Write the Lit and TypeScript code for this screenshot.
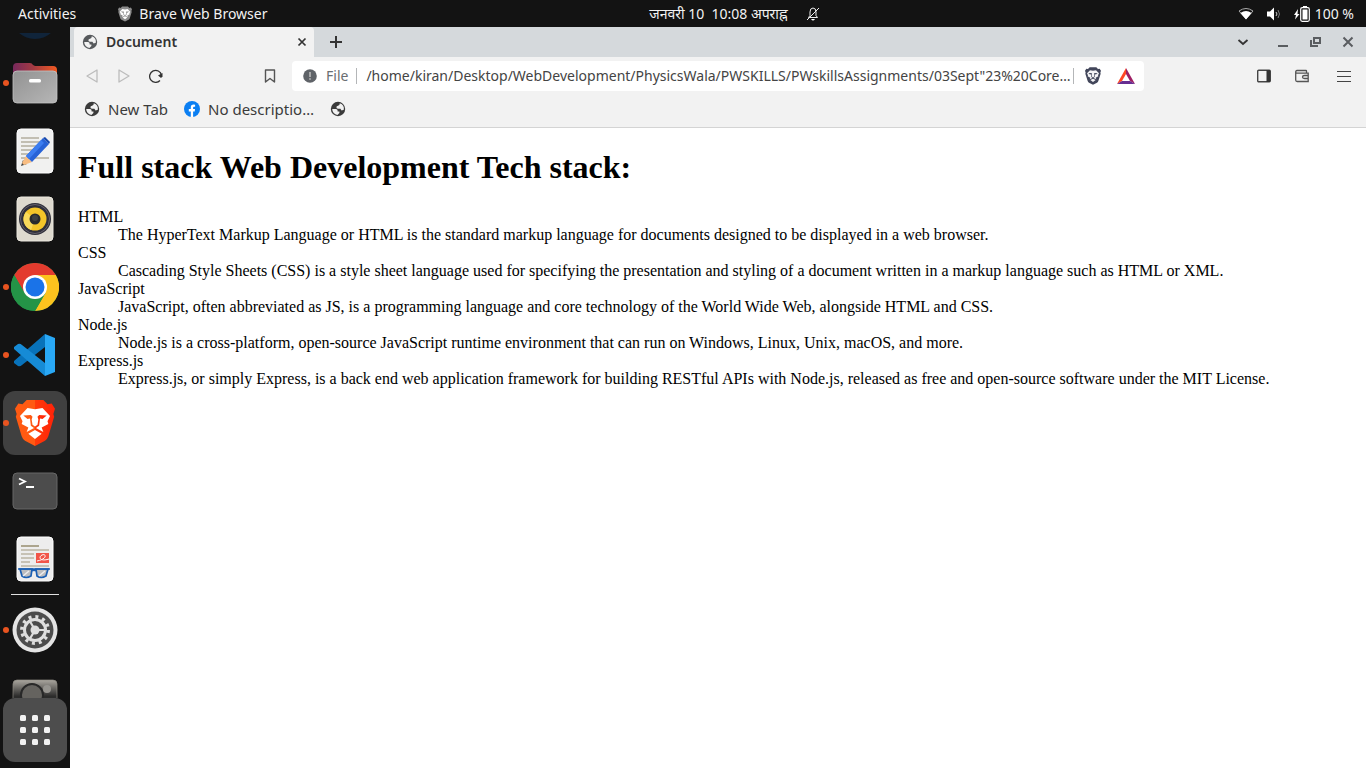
import { LitElement, html, css, svg } from "lit";
import { customElement } from "lit/decorators.js";

const globe = html`<svg width="16" height="16" viewBox="0 0 16 16" aria-hidden="true">
  <circle cx="8" cy="8" r="7.2" fill="currentColor" />
  <path d="M2.2 8H6Q7.600 8 7.600 9.600V10.400H9.400V12L7.400 13.900A5.900 5.900 0 0 1 2.200 8ZM9.800 2.300A5.900 5.900 0 0 1 13.800 8.800L11.600 9.400 10.400 7.800H8Q6.400 7.600 6.400 6.200 6.400 5 8 4.800 9.800 4.600 9.800 2.300Z" fill="#f2f2f2" />
</svg>`;

const lion = (shield: string, face: string) => svg`
  <path d="M14 1h20l5 5 5-1 4 6-2 6 1 3-7 22q-1 3-4 5L24 53 12 47q-3-2-4-5L1 20l1-3-2-6 4-6 5 1z" fill=${shield} />
  <path d="M15 10 24 11.500 33 10 42 19 39 25 40 28 32 32 34 37 24 32 14 37 16 32 8 28 9 25 6 19ZM16 39 24 35 32 39 24 45Z" fill=${face} />
  <path d="M10 18.500 19 18 21 20 20 23 21 29 24 31 27 29 28 23 27 20 29 18 38 18.500 33 22.500 30 22 29 30 24 33.500 19 30 18 22 15 22.500Z" fill=${shield} />`;

const folder = html`<svg width="46" height="42" viewBox="0 0 46 42" aria-hidden="true">
  <defs>
    <linearGradient id="fb"><stop stop-color="#77295c" /><stop offset=".45" stop-color="#a33a43" /><stop offset="1" stop-color="#f15a22" /></linearGradient>
    <linearGradient id="ff" x1="0" y1="0" x2="1" y2="1"><stop stop-color="#929292" /><stop offset="1" stop-color="#b6b6b6" /></linearGradient>
  </defs>
  <path d="M1 20V5q0-4 4-4h13q2 0 3 2l2 1h18q4 0 4 4v12z" fill="url(#fb)" />
  <rect x="1" y="9" width="44" height="32" rx="4" fill="url(#ff)" stroke="#c4c4c4" stroke-width=".8" />
  <rect x="17" y="17" width="12" height="3.5" rx="1.5" fill="#fff" />
</svg>`;

const editor = html`<svg width="38" height="46" viewBox="0 0 38 46" aria-hidden="true">
  <rect x="1" y="1" width="36" height="44" rx="4" fill="#f1f1f0" stroke="#fff" />
  <path d="M5 10h18M5 14h22M5 18h15M5 22h14M5 26h12M5 30h28" stroke="#c2beb2" stroke-width="2" />
  <path d="M7 32 5 38 11 36Z" fill="#444" /><path d="m10 28-4 7 2 2 8-3z" fill="#f8bd82" />
  <path d="M27 10 33 16 16 34 10 28Z" fill="#2863d7" /><path d="m25 12 3 3-15 16-3-3z" fill="#3c7df0" /><path d="m27 10 2-1 5 5-1 2z" fill="#1748ac" />
</svg>`;

const speaker = html`<svg width="38" height="46" viewBox="0 0 38 46" aria-hidden="true">
  <rect x="1" y="1" width="36" height="44" rx="4" fill="#dedacf" stroke="#ebe8df" />
  <circle cx="19" cy="23" r="16" fill="#30303a" /><circle cx="19" cy="23" r="14.5" fill="none" stroke="#65616d" stroke-width="1" />
  <circle cx="19" cy="23" r="11.5" fill="#f4c529" /><path d="M10 16a11.5 11.5 0 0 0 5 18l4-11z" fill="#f9da5b" />
  <circle cx="19" cy="23" r="5.5" fill="#292b2d" /><circle cx="19" cy="22" r="3" fill="#3e4142" />
</svg>`;

const chrome = html`<svg width="48" height="48" viewBox="0 0 48 48" aria-hidden="true">
  <circle cx="24" cy="24" r="24" fill="#1e8e4a" />
  <path d="M3.2 12A24 24 0 0 1 44.8 12H24L13.6 30Z" fill="#e33b2e" />
  <path d="M44.8 12A24 24 0 0 1 24 48L34.4 30 24 12Z" fill="#fcc31e" />
  <path d="M3.2 12 13.6 30 24 36 34.4 30 24 48A24 24 0 0 1 3.2 12Z" fill="#249447" />
  <circle cx="24" cy="24" r="12" fill="#fff" /><circle cx="24" cy="24" r="9.5" fill="#1a73e8" />
</svg>`;

const code = html`<svg width="42" height="42" viewBox="0 0 42 42" aria-hidden="true">
  <path d="M31 0 0 27V29L4 32Q6 33 8 31L31 13Z" fill="#0872ba" />
  <path d="M31 42 0 15V13L4 10Q6 9 8 11L31 29Z" fill="#168bd6" />
  <path d="M31 0 41 4V38L31 42Z" fill="#29a8f5" />
</svg>`;

const brave = html`<svg width="40" height="48" viewBox="0 0 48 54" preserveAspectRatio="none" aria-hidden="true">
  <defs><linearGradient id="br"><stop offset=".5" stop-color="#ff5a12" /><stop offset=".5" stop-color="#ff3b0a" /><stop offset="1" stop-color="#ff2208" /></linearGradient></defs>
  ${lion("url(#br)", "#fff")}
</svg>`;

const terminal = html`<svg width="46" height="38" viewBox="0 0 46 38" aria-hidden="true">
  <rect x="1" y="1" width="44" height="36" rx="4" fill="#4c4c4c" stroke="#666" />
  <path d="m7 6.500 6 3-6 3M14 15h8" fill="none" stroke="#fff" stroke-width="1.8" />
</svg>`;

const viewer = html`<svg width="38" height="46" viewBox="0 0 38 46" aria-hidden="true">
  <rect x="1" y="1" width="36" height="44" rx="4" fill="#ededed" stroke="#fff" />
  <path d="M5 10h18" stroke="#aca58e" stroke-width="2" /><path d="M5 14h28M5 18h13M5 22h13M5 26h9M5 30h28" stroke="#c7c2b5" stroke-width="2" />
  <rect x="20" y="17" width="13" height="10" fill="#f15549" /><path d="M21 25c11-2 9-8 5-6s-2 7 7 4" fill="none" stroke="#fff" />
  <g fill="#bcbdbf" stroke="#1a5fb4" stroke-width="1.7"><path d="M4 33h12l-1 7q-5 3-9 0zM20 33h12l-2 7q-5 3-9 0z" /><path d="M2 33h32M16 35q2-2 4 0" fill="none" /></g>
  <path d="m7 40 6-5M23 40l6-5" stroke="#eee" stroke-width="1.5" />
</svg>`;

const settings = html`<svg width="46" height="46" viewBox="0 0 46 46" aria-hidden="true">
  <circle cx="23" cy="23" r="22.5" fill="#e4e4e4" /><circle cx="23" cy="23" r="18.5" fill="#4c4c4c" />
  <circle cx="23" cy="23" r="13.2" fill="none" stroke="#dedede" stroke-width="3.5" stroke-dasharray="3 3.910" />
  <circle cx="23" cy="23" r="10.5" fill="none" stroke="#dedede" stroke-width="3" />
  <path d="M23 23h11M23 23l-5.5-9.5M23 23l-5.5 9.5" stroke="#dedede" stroke-width="2.2" /><circle cx="23" cy="23" r="4.5" fill="#dedede" />
</svg>`;

const camera = html`<svg width="46" height="38" viewBox="0 0 46 38" aria-hidden="true">
  <defs><linearGradient id="cm" x2="0" y2="1"><stop stop-color="#aaa69f" /><stop offset=".45" stop-color="#2c2c2b" /></linearGradient></defs>
  <rect x="1" y="1" width="44" height="36" rx="4" fill="url(#cm)" stroke="#8c8982" stroke-width=".7" />
  <circle cx="20" cy="16" r="11" fill="#65635f" stroke="#282828" stroke-width="2" /><circle cx="35" cy="10" r="4" fill="#96948f" />
</svg>`;

const worldApp = html`<svg width="48" height="48" viewBox="0 0 48 48" aria-hidden="true"><circle cx="24" cy="24" r="24" fill="#10243a" /></svg>`;

const apps = [
  { name: "Thunderbird", icon: worldApp },
  { name: "Files", icon: folder, open: true },
  { name: "Text Editor", icon: editor },
  { name: "Rhythmbox", icon: speaker },
  { name: "Google Chrome", icon: chrome, open: true },
  { name: "Visual Studio Code", icon: code, open: true },
  { name: "Brave Web Browser", icon: brave, open: true, active: true },
  { name: "Terminal", icon: terminal },
  { name: "Document Viewer", icon: viewer },
  { name: "Settings", icon: settings, open: true, separated: true },
  { name: "Screenshot", icon: camera },
];

const terms = [
  ["HTML", "The HyperText Markup Language or HTML is the standard markup language for documents designed to be displayed in a web browser."],
  ["CSS", "Cascading Style Sheets (CSS) is a style sheet language used for specifying the presentation and styling of a document written in a markup language such as HTML or XML."],
  ["JavaScript", "JavaScript, often abbreviated as JS, is a programming language and core technology of the World Wide Web, alongside HTML and CSS."],
  ["Node.js", "Node.js is a cross-platform, open-source JavaScript runtime environment that can run on Windows, Linux, Unix, macOS, and more."],
  ["Express.js", "Express.js, or simply Express, is a back end web application framework for building RESTful APIs with Node.js, released as free and open-source software under the MIT License."],
];

const reset = css`
  * { box-sizing: border-box; }
  svg { display: block; flex: none; }
  button { font: inherit; color: inherit; background: none; border: 0; padding: 0; margin: 0; display: flex; align-items: center; justify-content: center; }
`;

@customElement("top-panel")
class TopPanel extends LitElement {
  static styles = [reset, css`
    :host { display: grid; grid-template-columns: 1fr auto 1fr; align-items: center; height: 27px; background: #131313; color: #f2f2f2; font: 14px/27px "Noto Sans", sans-serif; white-space: nowrap; }
    .group { display: flex; align-items: center; padding-left: 18px; gap: 42px; }
    .app { gap: 7px; }
    .clock { gap: 18px; padding-left: 103px; white-space: pre; }
    .status { justify-self: end; padding-right: 12px; gap: 12px; }
    .battery { display: flex; align-items: center; gap: 5px; }
  `];
  render() {
    return html`
      <div class="group">
        <button>Activities</button>
        <button class="app"><svg width="14" height="16" viewBox="0 0 48 54" aria-hidden="true">${lion("#8b8b8b", "#fff")}</svg>Brave Web Browser</button>
      </div>
      <button class="clock"><span>जनवरी 10  10:08 अपराह्न</span>
        <svg width="14" height="16" viewBox="0 0 14 16" fill="none" stroke="#eee" aria-label="Notifications muted"><path d="M2.5 11.5 4 9.5V6q0-4 3-4t3 4v3.5l1.5 2zM1 14 13 2" /><path d="M5 13h4q-2 3-4 0z" fill="#fff" stroke="none" /></svg></button>
      <div class="group status">
        <svg width="16" height="14" viewBox="0 0 16 14" fill="none" aria-label="Wi-Fi"><path d="M1 4Q8-1 15 4L8 12Z" stroke="#aaa" /><path d="M2.500 6Q8 2 13.500 6L8 12.500Z" fill="#fff" /></svg>
        <svg width="16" height="14" viewBox="0 0 16 14" fill="none" aria-label="Volume"><path d="M1 4.500h3L8 .5v13L4 9.500H1z" fill="#fff" /><path d="M10 5q2 2 0 4" stroke="#ccc" /><path d="M12 3q3 4 0 8" stroke="#777" /></svg>
        <span class="battery"><svg width="16" height="16" viewBox="0 0 16 16" aria-label="Battery charging"><path d="M4 3 0 9h2l-1 4.500L5.500 8H3.500z" fill="#fff" /><rect x="6.700" y="1.700" width="8.600" height="13.600" rx="1.500" fill="none" stroke="#fff" stroke-width="1.200" /><path d="M8.500 3.500h5v10h-5zM9 0h4v2H9z" fill="#fff" /></svg>100 %</span>
      </div>`;
  }
}

@customElement("app-dock")
class AppDock extends LitElement {
  static styles = [reset, css`
    :host { display: flex; flex-direction: column; width: 70px; flex: none; background: #131313; padding-bottom: 6px; min-height: 0; }
    .scroll { flex: 1; min-height: 0; overflow: hidden; margin-top: 6px; }
    .list { margin: -50px 0 0; padding: 0; list-style: none; display: flex; flex-direction: column; gap: 4px; }
    .item { display: flex; align-items: center; padding-left: 3px; }
    .separated { padding-top: 4px; margin-top: -1px; background: linear-gradient(#e0e0e0, #e0e0e0) 11px 0 / 48px 1px no-repeat; }
    .dot { width: 6px; height: 6px; border-radius: 50%; margin-right: -6px; flex: none; }
    .open .dot { background: #e95420; z-index: 1; }
    .tile { width: 64px; height: 64px; border-radius: 12px; flex: none; }
    .active .tile { background: #404040; }
    .all { margin: 0 3px; background: #4d4d4d; }
  `];
  render() {
    return html`
      <nav class="scroll" aria-label="Dash"><ul class="list">
        ${apps.map((a) => html`<li class="item ${a.open ? "open" : ""} ${a.active ? "active" : ""} ${a.separated ? "separated" : ""}">
          <span class="dot"></span><button class="tile" aria-label=${a.name}>${a.icon}</button></li>`)}
      </ul></nav>
      <button class="tile all" aria-label="Show Applications"><svg width="30" height="30" viewBox="0 0 30 30" fill="#f2f2f2">
        ${[0, 12, 24].map((y) => [0, 12, 24].map((x) => svg`<rect x=${x} y=${y} width="6" height="6" rx="1.5" />`))}
      </svg></button>`;
  }
}

@customElement("browser-chrome")
class BrowserChrome extends LitElement {
  static styles = [reset, css`
    :host { display: block; font: 14px/20px "Noto Sans", sans-serif; color: #3b3b3b; background: #f2f2f2; border-bottom: 1px solid #d4d4d4; white-space: nowrap; }
    .tabs { display: flex; align-items: center; height: 30px; background: #d5d9dc; padding: 0 12px 0 4px; }
    .tab { display: flex; align-items: center; gap: 8px; width: 240px; height: 30px; padding: 0 6px 0 8px; background: #f2f2f2; border-radius: 4px 4px 0 0; color: #56595c; }
    .title { flex: 1; color: #333; font-weight: 600; }
    .new { width: 28px; height: 28px; margin: 0 auto 0 8px; }
    .window { display: flex; gap: 20px; color: #5a5d60; }
    .first { margin-right: 9px; }
    .toolbar { display: grid; grid-template-columns: 222px 1fr 222px; align-items: center; height: 38px; }
    .nav { display: flex; gap: 4px; padding: 0 8px; }
    .nav button { width: 28px; height: 28px; }
    .save { margin-left: auto; }
    .omni { display: flex; align-items: center; height: 30px; padding: 0 9px 0 10px; background: #fff; border-radius: 4px; min-width: 0; }
    .info { gap: 8px; color: #6a6e72; }
    .bar { width: 1px; height: 16px; background: #b4b6b8; margin: 0 9px 0 8px; flex: none; }
    .end { margin-left: 0; }
    .url { flex: 1; min-width: 0; border: 0; outline: 0; padding: 0; background: none; font: inherit; color: #444; }
    .shields { margin: 0 16px 0 2px; }
    .tools { display: flex; justify-content: flex-end; gap: 24px; padding-right: 15px; }
    .menu { margin-left: 4px; }
    .bookmarks { display: flex; align-items: center; height: 32px; padding: 0 6px 4px; font-size: 15px; }
    .mark { display: flex; align-items: center; gap: 8px; padding: 0 8px; color: inherit; text-decoration: none; }
  `];
  render() {
    return html`
      <div class="tabs">
        <div class="tab">${globe}<span class="title">Document</span>
          <button aria-label="Close tab"><svg width="12" height="12" viewBox="0 0 12 12" stroke="#333" stroke-width="1.7"><path d="m2.5 2.5 7 7m0-7-7 7" /></svg></button></div>
        <button class="new" aria-label="New tab"><svg width="12" height="12" viewBox="0 0 12 12" stroke="#333" stroke-width="2"><path d="M6 0v12M0 6h12" /></svg></button>
        <div class="window">
          <button class="first" aria-label="Search tabs"><svg width="12" height="12" viewBox="0 0 12 12" fill="none" stroke="#333" stroke-width="1.800"><path d="m1.500 4 4.500 4 4.500-4" /></svg></button>
          <button aria-label="Minimize"><svg width="12" height="12" viewBox="0 0 12 12" fill="currentColor"><path d="M0 9h10v2H0z" /></svg></button>
          <button aria-label="Restore"><svg width="12" height="12" viewBox="0 0 12 12" fill="none" stroke="currentColor" stroke-width="2"><path d="M4 2h6v5H4zM1 4v6h7" /></svg></button>
          <button aria-label="Close"><svg width="12" height="12" viewBox="0 0 12 12" stroke="currentColor" stroke-width="2"><path d="m1.500 1.500 9 9m0-9-9 9" /></svg></button>
        </div>
      </div>
      <div class="toolbar">
        <div class="nav">
          <button aria-label="Back"><svg width="14" height="14" viewBox="0 0 14 14" fill="none" stroke="#bcbcbc" stroke-width="1.3" stroke-linejoin="round"><path d="M12 1v12L2 7z" /></svg></button>
          <button aria-label="Forward"><svg width="14" height="14" viewBox="0 0 14 14" fill="none" stroke="#bcbcbc" stroke-width="1.3" stroke-linejoin="round"><path d="M2 1v12l10-6z" /></svg></button>
          <button aria-label="Reload"><svg width="14" height="14" viewBox="0 0 14 14" fill="none"><path d="M11 11.500A6 6 0 1 1 12.500 6" stroke="#333" stroke-width="1.300" /><path d="M9 6.500 13.500 4v3.500L12 9z" fill="#333" /></svg></button>
          <button class="save" aria-label="Bookmark this page"><svg width="12" height="14" viewBox="0 0 12 14" fill="none" stroke="#555" stroke-width="1.4" stroke-linejoin="round"><path d="M1.500 1h9v12L6 9.500 1.500 13z" /></svg></button>
        </div>
        <div class="omni">
          <button class="info"><svg width="16" height="16" viewBox="0 0 16 16"><circle cx="8" cy="8" r="6.800" fill="#5f6368" /><path d="M7.200 4h1.600v5H7.200zM7.200 10.200h1.600v1.600H7.200z" fill="#bbb" /></svg>File</button>
          <span class="bar"></span>
          <input class="url" aria-label="Address" .value=${'/home/kiran/Desktop/WebDevelopment/PhysicsWala/PWSKILLS/PWskillsAssignments/03Sept"23%20Core…'} />
          <span class="bar end"></span>
          <button class="shields" aria-label="Brave Shields"><svg width="16" height="18" viewBox="0 0 48 54">${lion("#42465a", "#f4f4f6")}</svg></button>
          <button aria-label="Brave Rewards"><svg width="18" height="16" viewBox="0 0 18 16"><path d="M9 0 0 16 5 13 9 6Z" fill="#ff4724" /><path d="M9 0 18 16 13 13 9 6Z" fill="#9e1f63" /><path d="M0 16h18l-5-3H5z" fill="#662d91" /></svg></button>
        </div>
        <div class="tools">
          <button aria-label="Sidebar"><svg width="14" height="14" viewBox="0 0 14 14"><rect x=".7" y="1.200" width="12.600" height="11.600" rx="1" fill="none" stroke="#444" stroke-width="1.4" /><path d="M9.500 1H13v12H9.500z" fill="#333" /></svg></button>
          <button aria-label="Wallet"><svg width="14" height="14" viewBox="0 0 14 14" fill="none" stroke="#555" stroke-width="1.3"><path d="M11.500 4V2Q11.500 1.500 11 1.500H2Q.7 1.500.7 3v8q0 1.500 1.500 1.500h11V4.200H2Q.7 4.200.7 3M13.300 6.500H9.500Q7.500 6.500 7.500 8t2 1.500h3.800" /></svg></button>
          <button class="menu" aria-label="Menu"><svg width="14" height="14" viewBox="0 0 14 14" stroke="#444"><path d="M0 2.500h14M0 7.500h14M0 12.500h14" /></svg></button>
        </div>
      </div>
      <nav class="bookmarks">
        <a class="mark" href="#">${globe}New Tab</a>
        <a class="mark" href="#"><svg width="16" height="16" viewBox="0 0 16 16"><circle cx="8" cy="8" r="8" fill="#0b7ff2" /><path d="M6.800 16V10.400H4.800V8.100H6.800V6.400Q6.800 3.600 9.600 3.600L11.100 3.700V5.700H10Q9.100 5.700 9.100 6.700V8.100H11L10.700 10.400H9.100V16Z" fill="#fff" /></svg>No descriptio…</a>
        <a class="mark" href="#" aria-label="Saved page">${globe}</a>
      </nav>`;
  }
}

@customElement("app-root")
class AppRoot extends LitElement {
  static styles = [reset, css`
    :host { display: flex; flex-direction: column; height: 100vh; overflow: hidden; background: #fff; }
    .desktop { display: flex; flex: 1; min-height: 0; }
    .browser { flex: 1; min-width: 0; display: flex; flex-direction: column; background: #fff; }
    .page { flex: 1; min-height: 0; padding: 0 8px; color: #000; font: 16px/18px "Liberation Serif", serif; overflow: auto; }
    .heading { font-size: 32px; line-height: 37px; font-weight: 700; margin: 21px 0 22px; }
    .terms { margin: 0; }
    .text { margin: 0 0 0 40px; }
  `];
  render() {
    return html`
      <top-panel></top-panel>
      <div class="desktop">
        <app-dock></app-dock>
        <div class="browser">
          <browser-chrome></browser-chrome>
          <main class="page">
            <h1 class="heading">Full stack Web Development Tech stack:</h1>
            <dl class="terms">${terms.map(([t, d]) => html`<dt>${t}</dt><dd class="text">${d}</dd>`)}</dl>
          </main>
        </div>
      </div>`;
  }
}
